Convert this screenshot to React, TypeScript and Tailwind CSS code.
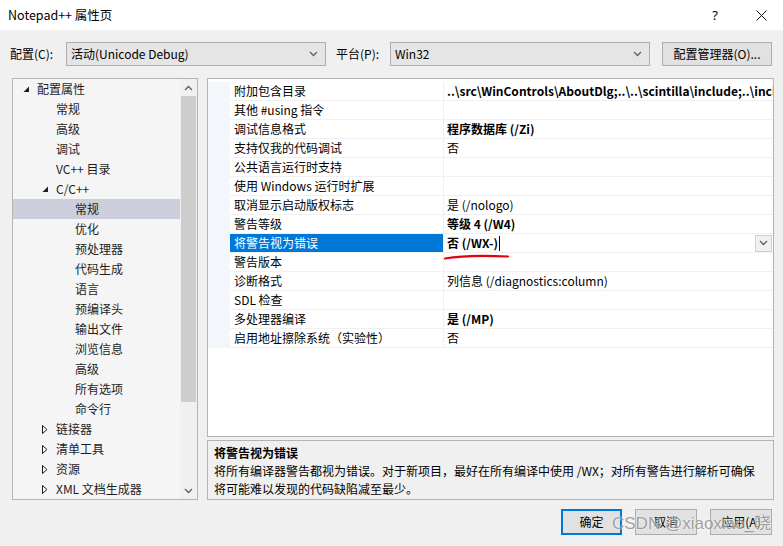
import type { FC } from "react";

type TreeItem = { label: string; level: number; mark?: "open" | "closed"; selected?: boolean };

const tree: TreeItem[] = [
  { label: "配置属性", level: 0, mark: "open" },
  { label: "常规", level: 1 },
  { label: "高级", level: 1 },
  { label: "调试", level: 1 },
  { label: "VC++ 目录", level: 1 },
  { label: "C/C++", level: 1, mark: "open" },
  { label: "常规", level: 2, selected: true },
  { label: "优化", level: 2 },
  { label: "预处理器", level: 2 },
  { label: "代码生成", level: 2 },
  { label: "语言", level: 2 },
  { label: "预编译头", level: 2 },
  { label: "输出文件", level: 2 },
  { label: "浏览信息", level: 2 },
  { label: "高级", level: 2 },
  { label: "所有选项", level: 2 },
  { label: "命令行", level: 2 },
  { label: "链接器", level: 1, mark: "closed" },
  { label: "清单工具", level: 1, mark: "closed" },
  { label: "资源", level: 1, mark: "closed" },
  { label: "XML 文档生成器", level: 1, mark: "closed" },
];

type Prop = { name: string; value?: string; bold?: boolean; selected?: boolean };

const props: Prop[] = [
  { name: "附加包含目录", value: "..\\src\\WinControls\\AboutDlg;..\\..\\scintilla\\include;..\\include;..\\src", bold: true },
  { name: "其他 #using 指令" },
  { name: "调试信息格式", value: "程序数据库 (/Zi)", bold: true },
  { name: "支持仅我的代码调试", value: "否" },
  { name: "公共语言运行时支持" },
  { name: "使用 Windows 运行时扩展" },
  { name: "取消显示启动版权标志", value: "是 (/nologo)" },
  { name: "警告等级", value: "等级 4 (/W4)", bold: true },
  { name: "将警告视为错误", value: "否 (/WX-)", bold: true, selected: true },
  { name: "警告版本" },
  { name: "诊断格式", value: "列信息 (/diagnostics:column)" },
  { name: "SDL 检查" },
  { name: "多处理器编译", value: "是 (/MP)", bold: true },
  { name: "启用地址擦除系统（实验性）", value: "否" },
];

const indent = ["w-[24px] pl-[10px]", "w-[43px] pl-[29px]", "w-[62px]"];

const Chevron: FC<{ up?: boolean }> = ({ up }) => (
  <svg width="9" height="6" viewBox="0 0 9 6" className="text-[#606060]">
    <path d={up ? "M1 5 L4.5 1.5 L8 5" : "M1 1 L4.5 4.5 L8 1"} fill="none" stroke="currentColor" strokeWidth="1.3" />
  </svg>
);

const Select: FC<{ text: string; width: string }> = ({ text, width }) => (
  <div className={`${width} flex h-[24px] items-center justify-between border border-[#adadad] bg-[#e5e5e5] pl-[4px] pr-[7px]`}>
    <span>{text}</span>
    <Chevron />
  </div>
);

const Button: FC<{ text: string; primary?: boolean; width: string }> = ({ text, primary, width }) => (
  <div
    className={`${width} flex h-[26px] items-center justify-center bg-[#e1e1e1] ${
      primary ? "border-2 border-[#0078d7]" : "border border-[#adadad]"
    }`}
  >
    {text}
  </div>
);

export default function App() {
  return (
    <div className="relative h-[546px] w-[783px] overflow-hidden bg-[#f0f0f0] font-['Noto_Sans_CJK_SC','Noto_Sans',sans-serif] text-[12px] leading-[16px] text-black">
      {/* title bar */}
      <div className="flex h-[30px] items-center bg-white pl-[8px]">
        <span className="flex-1 text-[12.5px]">Notepad++ 属性页</span>
        <span className="mr-[38px] font-['Noto_Sans',sans-serif] text-[13px]">?</span>
        <svg width="11" height="11" viewBox="0 0 11 11" className="mr-[16px]">
          <path d="M0.5 0.5 L10.5 10.5 M10.5 0.5 L0.5 10.5" stroke="#111" strokeWidth="1" />
        </svg>
      </div>

      {/* configuration row */}
      <div className="mt-[12px] flex h-[24px] items-center">
        <span className="ml-[10px] w-[56px]">配置(C):</span>
        <Select text="活动(Unicode Debug)" width="w-[260px]" />
        <span className="ml-[10px] w-[54px]">平台(P):</span>
        <Select text="Win32" width="w-[260px]" />
        <div className="ml-[12px] flex h-[24px] w-[110px] items-center justify-center border border-[#adadad] bg-[#e1e1e1]">
          配置管理器(O)...
        </div>
      </div>

      {/* main area */}
      <div className="mt-[12px] flex">
        {/* tree */}
        <div className="ml-[12px] flex h-[422px] w-[186px] border border-[#b4b4b4] bg-[#f5f5f5]">
          <div className="flex-1 overflow-hidden">
            {tree.map((item, i) => (
              <div
                key={i}
                className={`flex h-[20px] items-center whitespace-nowrap text-[#1e1e1e] ${item.selected ? "bg-[#cccedb]" : ""}`}
              >
                <span className={`flex shrink-0 items-center ${indent[item.level]}`}>
                  {item.mark === "open" && (
                    <svg width="7" height="7" viewBox="0 0 7 7">
                      <path d="M6 0.5 L6 6 L0.5 6 Z" fill="#1e1e1e" />
                    </svg>
                  )}
                  {item.mark === "closed" && (
                    <svg width="6" height="9" viewBox="0 0 6 9">
                      <path d="M0.5 0.5 L5 4.5 L0.5 8.5 Z" fill="none" stroke="#1e1e1e" strokeWidth="1" />
                    </svg>
                  )}
                </span>
                <span>{item.label}</span>
              </div>
            ))}
          </div>
          <div className="flex w-[17px] flex-col bg-[#f0f0f0]">
            <div className="flex h-[17px] items-center justify-center">
              <Chevron up />
            </div>
            <div className="mx-[1px] h-[306px] bg-[#cdcdcd]" />
            <div className="flex-1" />
            <div className="flex h-[17px] items-center justify-center">
              <Chevron />
            </div>
          </div>
        </div>

        {/* right column */}
        <div className="ml-[9px] flex w-[567px] flex-col">
          <div className="relative h-[359px] border border-[#b4b4b4] bg-white pt-[3px]">
            {props.map((p, i) => (
              <div key={i} className="flex h-[19px]">
                <div className="w-[22px] bg-[#f3f6fb]" />
                <div
                  className={`flex w-[214px] items-center whitespace-nowrap border-b border-r border-[#f0f0f0] pl-[4px] ${
                    p.selected ? "bg-[#0078d7] text-white" : ""
                  }`}
                >
                  {p.name}
                </div>
                <div className="flex flex-1 items-center overflow-hidden whitespace-nowrap border-b border-[#f0f0f0] pl-[3px]">
                  <span className={p.bold ? "font-bold" : ""}>{p.value}</span>
                  {p.selected && <span className="ml-[1px] h-[15px] w-[1px] bg-black" />}
                  {p.selected && (
                    <div className="ml-auto mr-[1px] flex h-[17px] w-[17px] items-center justify-center border border-[#cfcfcf] bg-[#f0f0f0]">
                      <Chevron />
                    </div>
                  )}
                </div>
              </div>
            ))}
            <svg className="absolute left-[236px] top-[174px]" width="66" height="8" viewBox="0 0 66 8">
              <path d="M1 5.5 C 15 3, 35 2, 64 3.5" fill="none" stroke="#e3000f" strokeWidth="2.2" strokeLinecap="round" />
            </svg>
          </div>

          <div className="mt-[3px] h-[60px] border border-[#b4b4b4] bg-[#f0f0f0] pl-[6px] pt-[3px] leading-[18px]">
            <div className="font-bold">将警告视为错误</div>
            <div>将所有编译器警告都视为错误。对于新项目，最好在所有编译中使用 /WX；对所有警告进行解析可确保</div>
            <div>将可能难以发现的代码缺陷减至最少。</div>
          </div>
        </div>
      </div>

      {/* buttons */}
      <div className="mt-[9px] flex justify-end gap-[13px] pr-[11px]">
        <Button text="确定" primary width="w-[61px]" />
        <Button text="取消" width="w-[62px]" />
        <Button text="应用(A)" width="w-[62px]" />
      </div>

      {/* watermark */}
      <div className="pointer-events-none absolute left-[612px] top-[513px] font-['Liberation_Sans','Noto_Sans_CJK_SC',sans-serif] text-[17px] leading-[22px] text-[rgba(120,120,120,0.7)] [text-shadow:0_0_2px_#fff]">
        CSDN @xiaoxiao_晓
      </div>
    </div>
  );
}
